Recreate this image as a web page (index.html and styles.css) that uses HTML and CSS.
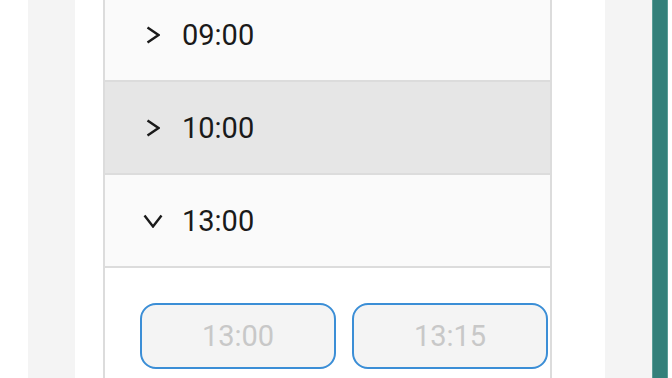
FILE: index.html
```html
<!DOCTYPE html>
<html lang="en">
<head>
    <meta charset="UTF-8">
    <meta name="viewport" content="width=device-width, initial-scale=1.0">
    <title>Time Slots</title>
    <link rel="stylesheet" href="styles.css">
</head>
<body>
    <div class="screen">
        <div class="gutter"></div>
        <div class="shade"></div>
        <div class="gap"></div>

        <div class="slot-panel">
            <div class="hour-row first">
                <svg class="chev" viewBox="0 0 14 18"><path d="M1.5 1.5 L12.5 9 L1.5 16.5" /></svg>
                <span class="hour">09:00</span>
            </div>
            <div class="hour-row active">
                <svg class="chev" viewBox="0 0 14 18"><path d="M1.5 1.5 L12.5 9 L1.5 16.5" /></svg>
                <span class="hour">10:00</span>
            </div>
            <div class="hour-row">
                <svg class="chev down" viewBox="0 0 20 14"><path d="M1.5 1.5 L10 12.5 L18.5 1.5" /></svg>
                <span class="hour">13:00</span>
            </div>
            <div class="slot-grid">
                <button class="slot-btn" disabled>13:00</button>
                <button class="slot-btn" disabled>13:15</button>
            </div>
        </div>

        <div class="gap wide"></div>
        <div class="shade"></div>
        <div class="scroll-bar"></div>
    </div>
</body>
</html>
```

FILE: styles.css
```css
body {
    margin: 0;
    background: #fff;
    font-family: Roboto, "Noto Sans", Arial, sans-serif;
    overflow: hidden;
}

.screen {
    display: flex;
    height: 378px;
    width: 672px;
}

.gutter {
    width: 28px;
    flex-shrink: 0;
}

.shade {
    width: 47px;
    flex-shrink: 0;
    background: #f4f4f4;
}

.gap {
    width: 28px;
    flex-shrink: 0;
}

.gap.wide {
    width: 53px;
}

.slot-panel {
    width: 445px;
    flex-shrink: 0;
    border-left: 2px solid #dcdcdc;
    border-right: 2px solid #dcdcdc;
    background: #fff;
}

.hour-row {
    height: 93px;
    display: flex;
    align-items: center;
    padding-left: 41px;
    background: #fafafa;
    border-bottom: 2px solid #dcdcdc;
    box-sizing: border-box;
}

.hour-row.first {
    height: 82px;
    align-items: flex-start;
}

.hour-row.first .hour {
    margin-top: 18px;
}

.hour-row.first .chev {
    margin-top: 26px;
}

.hour-row.active {
    background: #e6e6e6;
}

.chev {
    width: 14px;
    height: 18px;
    margin-right: 22px;
    fill: none;
    stroke: #1a1a1a;
    stroke-width: 2.4;
    flex-shrink: 0;
}

.chev.down {
    width: 20px;
    height: 14px;
    margin-left: -3px;
    margin-right: 19px;
}

.hour {
    font-size: 29px;
    color: #1a1a1a;
    line-height: 34px;
}

.slot-grid {
    display: flex;
    gap: 16px;
    padding: 35px 0 0 35px;
}

.slot-btn {
    width: 196px;
    height: 66px;
    border: 2px solid #3b8ed6;
    border-radius: 16px;
    background: #f4f4f4;
    color: #c8c8c8;
    font-family: Roboto, "Noto Sans", Arial, sans-serif;
    font-size: 29px;
    padding: 0;
}

.scroll-bar {
    width: 16px;
    flex-shrink: 0;
    background: #33807a;
    border-left: 1px solid #5a9d97;
    border-right: 1px solid #5a9d97;
    box-sizing: border-box;
}
```
